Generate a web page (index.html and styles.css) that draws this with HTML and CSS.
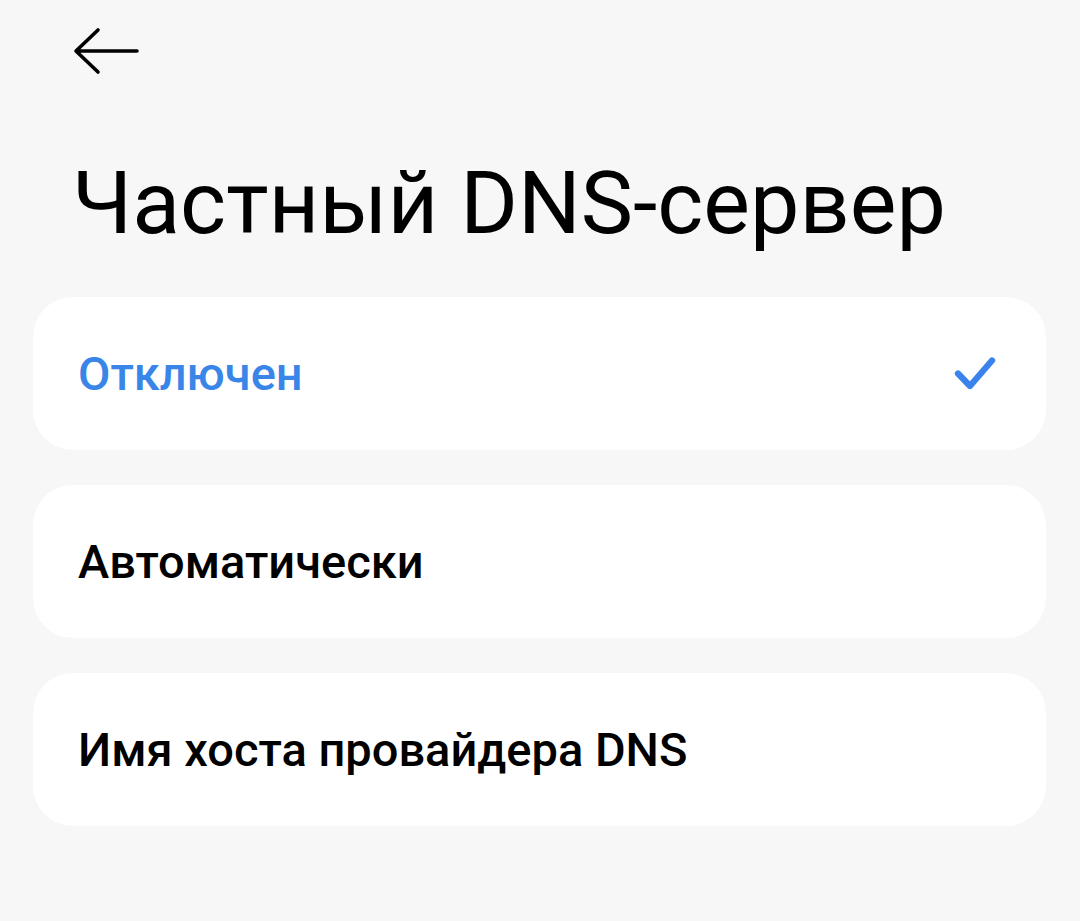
FILE: index.html
```html
<!DOCTYPE html>
<html lang="ru">
<head>
<meta charset="utf-8">
<link rel="stylesheet" href="styles.css">
</head>
<body>
<div class="screen">
  <header class="topbar">
    <svg class="back" width="66" height="48" viewBox="0 0 66 48" aria-label="Назад">
      <path d="M3 24 H64 M25 3 L3 24 L25 45" fill="none" stroke="#000" stroke-width="3.6" stroke-linecap="round" stroke-linejoin="round"/>
    </svg>
  </header>
  <h1 class="title">Частный DNS-сервер</h1>
  <div class="options">
    <div class="option selected">
      <span class="label">Отключен</span>
      <svg class="check" width="44" height="36" viewBox="0 0 44 36">
        <path d="M4 17.5 L16 30 L38 4.5" fill="none" stroke="#3a83ec" stroke-width="6.3" stroke-linecap="round" stroke-linejoin="round"/>
      </svg>
    </div>
    <div class="option">
      <span class="label">Автоматически</span>
    </div>
    <div class="option">
      <span class="label">Имя хоста провайдера DNS</span>
    </div>
  </div>
</div>
</body>
</html>
```
FILE: styles.css
```css
html, body {
  margin: 0;
  padding: 0;
  background: #f7f7f7;
}
body {
  font-family: Roboto, "Noto Sans", sans-serif;
  color: #000;
}
.screen {
  width: 1080px;
  height: 921px;
  overflow: hidden;
}
.topbar {
  height: 75px;
  padding: 27px 0 0 73px;
  box-sizing: border-box;
}
.back {
  display: block;
}
.title {
  margin: 84px 0 0 72px;
  font-size: 88px;
  font-weight: 400;
  line-height: 88px;
  letter-spacing: 0;
}
.options {
  margin: 50px 34px 0 33px;
  display: flex;
  flex-direction: column;
  gap: 35px;
}
.option {
  height: 153px;
  background: #fff;
  border-radius: 40px;
  display: flex;
  align-items: center;
  justify-content: space-between;
  padding: 0 48px 0 45px;
  box-sizing: border-box;
}
.label {
  font-size: 47px;
  font-weight: 500;
  line-height: 1;
}
.selected .label {
  color: #3a86e8;
}
.check {
  display: block;
}
```
